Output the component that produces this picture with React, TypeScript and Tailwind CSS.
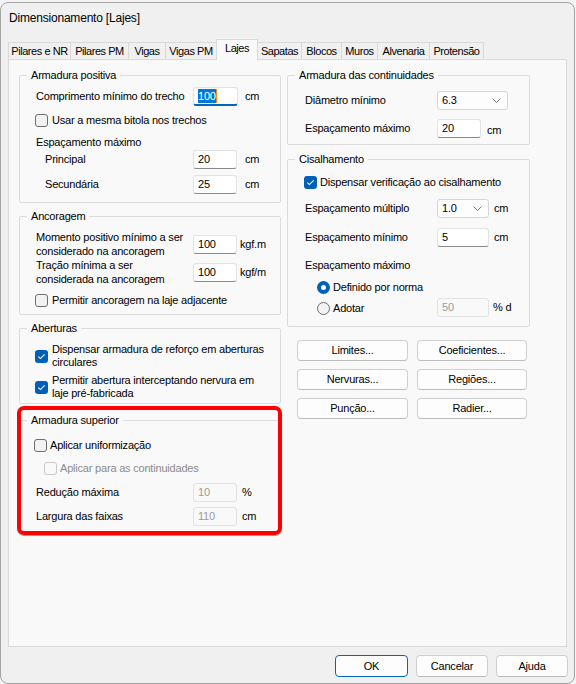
import React from 'react';
import clsx from 'clsx';

const tabs = [
  { label: 'Pilares e NR', w: 'w-[63px]' },
  { label: 'Pilares PM', w: 'w-[59px]' },
  { label: 'Vigas', w: 'w-[38px]' },
  { label: 'Vigas PM', w: 'w-[52px]' },
  { label: 'Lajes', w: 'w-[42px]', active: true },
  { label: 'Sapatas', w: 'w-[45px]' },
  { label: 'Blocos', w: 'w-[41px]' },
  { label: 'Muros', w: 'w-[37px]' },
  { label: 'Alvenaria', w: 'w-[53px]' },
  { label: 'Protensão', w: 'w-[55px]' },
];

function Checkbox({ checked, disabled }: { checked?: boolean; disabled?: boolean }) {
  if (checked) {
    return (
      <span className="w-[13px] h-[13px] shrink-0 rounded-[3px] bg-[#005fb8] flex items-center justify-center">
        <svg width="13" height="13" viewBox="0 0 13 13">
          <path d="M3.3 6.6 L5.4 8.6 L9.7 4.3" fill="none" stroke="#fff" strokeWidth="1.1" />
        </svg>
      </span>
    );
  }
  return (
    <span
      className={clsx(
        'w-[13px] h-[13px] shrink-0 rounded-[3px] border',
        disabled ? 'border-[#c8c8c8] bg-[#f9f9f9]' : 'border-[#6e6e6e] bg-[#f2f2f2]'
      )}
    />
  );
}

function Radio({ checked }: { checked?: boolean }) {
  if (checked) {
    return (
      <span className="w-[13px] h-[13px] shrink-0 rounded-full bg-[#005fb8] flex items-center justify-center">
        <span className="w-[5px] h-[5px] rounded-full bg-white" />
      </span>
    );
  }
  return <span className="w-[13px] h-[13px] shrink-0 rounded-full border border-[#6e6e6e] bg-[#f2f2f2]" />;
}

function Field({
  value,
  w,
  disabled,
  focused,
}: {
  value: string;
  w: string;
  disabled?: boolean;
  focused?: boolean;
}) {
  return (
    <div
      className={clsx(
        'h-[19px] shrink-0 rounded-[3px] border flex items-center px-[4px]',
        w,
        disabled && 'bg-[#f9f9f9] border-[#e2e2e2] text-[#9a9a9a]',
        !disabled && !focused && 'bg-white border-[#e3e3e3] border-b-[#8a8a8a]',
        focused && 'bg-white border-[#e3e3e3] border-b-2 border-b-[#0067c0]'
      )}
    >
      {focused ? (
        <>
          <span className="bg-[#0078d7] text-white leading-[14px]">{value}</span>
          <span className="w-px h-[14px] bg-[#ff8c00]" />
        </>
      ) : (
        value
      )}
    </div>
  );
}

function Select({ value, w }: { value: string; w: string }) {
  return (
    <div
      className={clsx(
        'h-[19px] shrink-0 rounded-[3px] border border-[#d6d6d6] bg-[#fdfdfd] flex items-center justify-between pl-[4px] pr-[6px]',
        w
      )}
    >
      <span>{value}</span>
      <svg width="9" height="5" viewBox="0 0 9 5">
        <path d="M0.5 0.5 L4.5 4.5 L8.5 0.5" fill="none" stroke="#6a6a6a" strokeWidth="0.9" />
      </svg>
    </div>
  );
}

function Group({ title, className, children }: { title: string; className: string; children: React.ReactNode }) {
  return (
    <div className={clsx('relative border border-[#dcdcdc] rounded-[2px] flex flex-col', className)}>
      <span className="absolute -top-[8px] left-[7px] bg-[#f9f9f9] px-[4px] leading-[15px]">{title}</span>
      {children}
    </div>
  );
}

function Button({ children, primary, className }: { children: React.ReactNode; primary?: boolean; className?: string }) {
  return (
    <div
      className={clsx(
        'rounded-[4px] border bg-[#fdfdfd] flex items-center justify-center',
        primary ? 'border-[#0067c0]' : 'border-[#d0d0d0] border-b-[#bcbcbc]',
        className
      )}
    >
      {children}
    </div>
  );
}

export default function App() {
  return (
    <div className="w-[576px] h-[684px] bg-[#f4f4f4] pt-[2px] text-[11px] tracking-[-0.2px] text-black font-['Liberation_Sans',Arial,sans-serif]">
      <div className="w-[575px] h-[682px] bg-[#f0f0f0] border border-[#a3a3a3] rounded-[8px] flex flex-col overflow-hidden">
        <div className="h-[29px] shrink-0 flex items-center pl-[8px] text-[12px]">Dimensionamento [Lajes]</div>

        {/* tabs */}
        <div className="h-[27px] shrink-0 flex items-end pl-[7px] tracking-[-0.45px]">
          {tabs.map((t) => (
            <div
              key={t.label}
              className={clsx(
                'border border-b-0 border-[#d9d9d9] -ml-px first:ml-0 flex items-center justify-center',
                t.w,
                t.active ? 'h-[21px] bg-[#f9f9f9] relative z-10 -mb-px pb-[3px]' : 'h-[17px] bg-[#f0f0f0]'
              )}
            >
              {t.label}
            </div>
          ))}
        </div>

        {/* panel */}
        <div className="ml-[7px] w-[559px] h-[588px] shrink-0 border border-[#d9d9d9] bg-[#f9f9f9] flex gap-[6px] pl-[10px] pt-[15px]">
          {/* left column */}
          <div className="w-[262px] flex flex-col">
            <Group title="Armadura positiva" className="h-[128px] pt-[11px]">
              <div className="h-[19px] flex items-center pl-[16px]">
                <span className="w-[157px]">Comprimento mínimo do trecho</span>
                <Field value="100" w="w-[45px]" focused />
                <span className="ml-[7px]">cm</span>
              </div>
              <div className="mt-[8px] h-[13px] flex items-center gap-[4px] pl-[15px]">
                <Checkbox />
                <span>Usar a mesma bitola nos trechos</span>
              </div>
              <div className="mt-[8px] h-[14px] flex items-center pl-[16px]">Espaçamento máximo</div>
              <div className="mt-px h-[19px] flex items-center pl-[25px]">
                <span className="w-[148px]">Principal</span>
                <Field value="20" w="w-[44px]" />
                <span className="ml-[8px]">cm</span>
              </div>
              <div className="mt-[6px] h-[19px] flex items-center pl-[25px]">
                <span className="w-[148px]">Secundária</span>
                <Field value="25" w="w-[44px]" />
                <span className="ml-[8px]">cm</span>
              </div>
            </Group>

            <Group title="Ancoragem" className="mt-[13px] h-[99px] pt-[13px]">
              <div className="h-[28px] flex items-center pl-[16px]">
                <span className="w-[157px] leading-[14px]">
                  Momento positivo mínimo a ser
                  <br />
                  considerado na ancoragem
                </span>
                <Field value="100" w="w-[44px]" />
                <span className="ml-[3px]">kgf.m</span>
              </div>
              <div className="h-[28px] flex items-center pl-[16px]">
                <span className="w-[157px] leading-[14px]">
                  Tração mínima a ser
                  <br />
                  considerada na ancoragem
                </span>
                <Field value="100" w="w-[44px]" />
                <span className="ml-[3px]">kgf/m</span>
              </div>
              <div className="mt-[8px] h-[13px] flex items-center gap-[4px] pl-[15px]">
                <Checkbox />
                <span>Permitir ancoragem na laje adjacente</span>
              </div>
            </Group>

            <Group title="Aberturas" className="mt-[13px] h-[76px] pt-[14px]">
              <div className="flex items-center gap-[4px] pl-[15px]">
                <Checkbox checked />
                <span className="leading-[13px]">
                  Dispensar armadura de reforço em aberturas
                  <br />
                  circulares
                </span>
              </div>
              <div className="mt-[5px] flex items-center gap-[4px] pl-[15px]">
                <Checkbox checked />
                <span className="leading-[13px]">
                  Permitir abertura interceptando nervura em
                  <br />
                  laje pré-fabricada
                </span>
              </div>
            </Group>

            <div className="relative mt-[16px]">
              <Group title="Armadura superior" className="h-[112px] pt-[18px]">
                <div className="h-[13px] flex items-center gap-[3px] pl-[14px]">
                  <Checkbox />
                  <span>Aplicar uniformização</span>
                </div>
                <div className="mt-[10px] h-[13px] flex items-center gap-[3px] pl-[24px] text-[#8c8c8c]">
                  <Checkbox disabled />
                  <span>Aplicar para as continuidades</span>
                </div>
                <div className="mt-[8px] h-[19px] flex items-center pl-[16px]">
                  <span className="w-[157px]">Redução máxima</span>
                  <Field value="10" w="w-[44px]" disabled />
                  <span className="ml-[5px]">%</span>
                </div>
                <div className="mt-[5px] h-[19px] flex items-center pl-[16px]">
                  <span className="w-[157px]">Largura das faixas</span>
                  <Field value="110" w="w-[44px]" disabled />
                  <span className="ml-[5px]">cm</span>
                </div>
              </Group>
              <div className="absolute -left-[2px] -top-[14px] w-[265px] h-[129px] border-4 border-[#ff0000] rounded-[7px] shadow-[0_1px_0_rgba(0,0,0,0.35)]" />
            </div>
          </div>

          {/* right column */}
          <div className="w-[243px] flex flex-col">
            <Group title="Armadura das continuidades" className="h-[70px] pt-[15px]">
              <div className="h-[19px] flex items-center pl-[17px]">
                <span className="w-[132px]">Diâmetro mínimo</span>
                <Select value="6.3" w="w-[71px]" />
              </div>
              <div className="mt-[9px] h-[19px] flex items-center pl-[17px]">
                <span className="w-[132px]">Espaçamento máximo</span>
                <Field value="20" w="w-[44px]" />
                <span className="ml-[6px] mt-[3px]">cm</span>
              </div>
            </Group>

            <Group title="Cisalhamento" className="mt-[14px] h-[168px] pt-[16px]">
              <div className="h-[13px] flex items-center gap-[3px] pl-[16px]">
                <Checkbox checked />
                <span>Dispensar verificação ao cisalhamento</span>
              </div>
              <div className="mt-[10px] h-[19px] flex items-center pl-[17px]">
                <span className="w-[132px]">Espaçamento múltiplo</span>
                <Select value="1.0" w="w-[52px]" />
                <span className="ml-[5px]">cm</span>
              </div>
              <div className="mt-[10px] h-[19px] flex items-center pl-[17px]">
                <span className="w-[132px]">Espaçamento mínimo</span>
                <Field value="5" w="w-[52px]" />
                <span className="ml-[5px]">cm</span>
              </div>
              <div className="mt-[11px] h-[14px] flex items-center pl-[17px]">Espaçamento máximo</div>
              <div className="mt-[9px] h-[13px] flex items-center gap-[3px] pl-[29px]">
                <Radio checked />
                <span>Definido por norma</span>
              </div>
              <div className="mt-[4px] h-[19px] flex items-center pl-[29px]">
                <div className="w-[120px] flex items-center gap-[3px] mt-[2px]">
                  <Radio />
                  <span>Adotar</span>
                </div>
                <Field value="50" w="w-[52px]" disabled />
                <span className="ml-[4px]">% d</span>
              </div>
            </Group>

            <div className="mt-[13px] ml-[10px] grid grid-cols-[111px_110px] gap-x-[9px] gap-y-[8px]">
              <Button className="h-[21px]">Limites...</Button>
              <Button className="h-[21px]">Coeficientes...</Button>
              <Button className="h-[21px]">Nervuras...</Button>
              <Button className="h-[21px]">Regiões...</Button>
              <Button className="h-[21px]">Punção...</Button>
              <Button className="h-[21px]">Radier...</Button>
            </div>
          </div>
        </div>

        {/* footer buttons */}
        <div className="mt-[8px] flex justify-end gap-[8px] pr-[6px]">
          <Button primary className="w-[73px] h-[22px]">OK</Button>
          <Button className="w-[72px] h-[22px]">Cancelar</Button>
          <Button className="w-[72px] h-[22px]">Ajuda</Button>
        </div>
      </div>
    </div>
  );
}
